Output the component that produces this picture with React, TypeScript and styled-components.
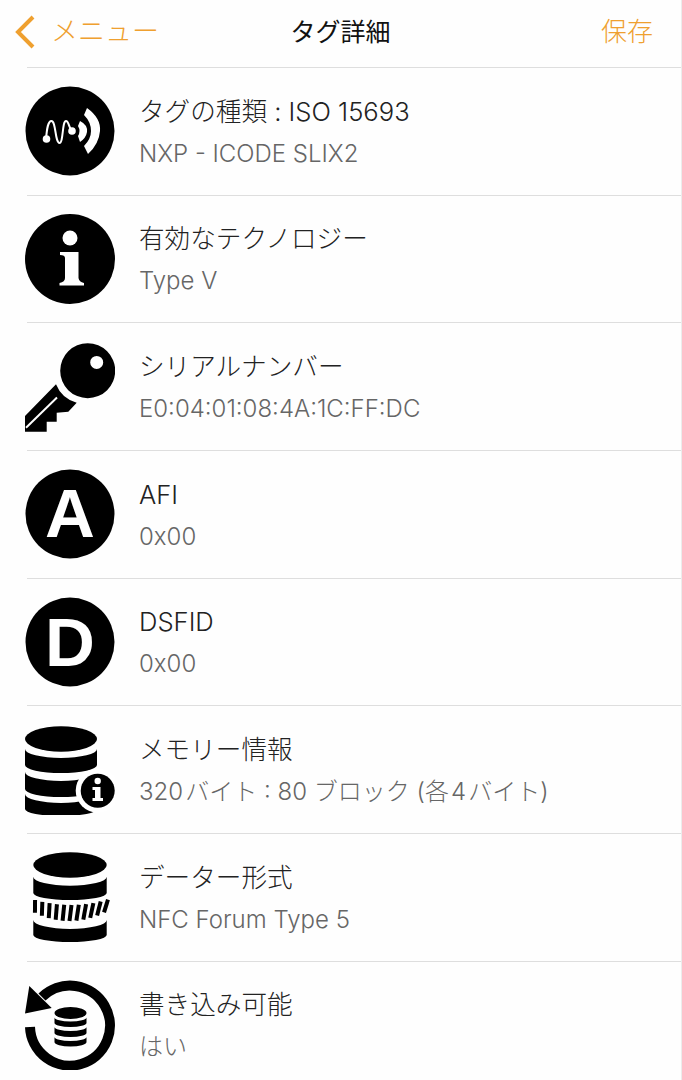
import React from 'react';
import styled, { createGlobalStyle } from 'styled-components';

const ORANGE = '#efa02f';

type Tag = {
  icon: React.ReactNode;
  title: string;
  value: string;
};

const WaveIcon = () => (
  <svg viewBox='0 0 90 90' width='90' height='90'>
    <circle cx='45' cy='45' r='44.5' fill='#000' />
    <path
      d='M21 53 C22 42 23 35 26.5 35 C31 35 30 57 34.5 57 C38.5 57 37 35 41 35 C44 35 44 43 47 45'
      fill='none'
      stroke='#fff'
      strokeWidth='2'
    />
    <circle cx='21.5' cy='53' r='3.8' fill='#fff' />
    <circle cx='47' cy='45' r='3.8' fill='#fff' />
    <path d='M55 35 Q63 39 62 46 Q61 52 55 56 L53 50 Q56 45 53 40 Z' fill='#fff' />
    <path d='M62 22 Q76 32 75 45 Q74 58 63 68 L59 60 Q66 53 66 45 Q66 36 59 29 Z' fill='#fff' />
  </svg>
);

const InfoIcon = () => (
  <svg viewBox='0 0 90 90' width='90' height='90'>
    <circle cx='45' cy='45' r='45' fill='#000' />
    <circle cx='45' cy='24' r='7.5' fill='#fff' />
    <path
      d='M35 38 H53.5 V64 Q54 68 59 69 V71.5 H34.5 V69 Q40 68 40 64 V44 Q40 41 35 41 Z'
      fill='#fff'
    />
  </svg>
);

const KeyIcon = () => (
  <svg viewBox='0 0 90 90' width='90' height='90'>
    <path
      fillRule='evenodd'
      d='M62.7 1.2 A27.5 27.5 0 1 1 62.7 56.2 A27.5 27.5 0 1 1 62.7 1.2 Z M71.7 13.9 A6.5 6.5 0 1 0 71.7 26.9 A6.5 6.5 0 1 0 71.7 13.9 Z'
      fill='#000'
    />
    <path
      d='M31 42.3 L0 74 V89.7 H21.7 V79.7 H31.7 V70.7 L43.3 69.7 L51.7 60.7 A31 31 0 0 1 31 42.3 Z'
      fill='#000'
    />
    <path d='M1 85.7 L32 55.5' stroke='#fff' strokeWidth='2' />
  </svg>
);

const LetterIcon = ({ letter, baseline }: { letter: string; baseline: number }) => (
  <svg viewBox='0 0 90 90' width='90' height='90'>
    <circle cx='45' cy='45' r='44.5' fill='#000' />
    <text
      x='45'
      y={baseline}
      fill='#fff'
      textAnchor='middle'
      fontFamily="'Liberation Sans', sans-serif"
      fontWeight='700'
      fontSize='69'
    >
      {letter}
    </text>
  </svg>
);

const MemoryIcon = () => (
  <svg viewBox='0 0 90 90' width='90' height='90'>
    <ellipse cx='36' cy='14' rx='36' ry='12.7' fill='#000' />
    <path d='M0 24 A36 9 0 0 0 72 24 V40 A36 8 0 0 1 0 40 Z' fill='#000' />
    <path d='M0 47 A36 9 0 0 0 72 47 V64 A36 8 0 0 1 0 64 Z' fill='#000' />
    <path d='M0 69 A36 9 0 0 0 72 69 V84 A36 7 0 0 1 0 84 Z' fill='#000' />
    <circle cx='72.7' cy='65.7' r='22' fill='#fff' />
    <circle cx='72.7' cy='65.7' r='17' fill='#000' />
    <circle cx='72.7' cy='56' r='3.2' fill='#fff' />
    <path d='M67.5 62 H75.5 V73 H78 V76 H67.5 V73 H70 V65 H67.5 Z' fill='#fff' />
  </svg>
);

// the ridged band of the cylinder, one slanted bar per step along the curve
const ridges = Array.from({ length: 11 }, (_, i) => {
  const x = 10 + i * 7.1;
  const t = (x - 45) / 36.7;
  const arc = 1 - t * t;
  const top = 47.5 + 5.5 * arc;
  const bottom = 60 + 9 * arc;
  const slant = 1 + t;
  return { x, top, bottom, slant };
});

const FormatIcon = () => (
  <svg viewBox='0 0 90 90' width='90' height='90'>
    <ellipse cx='45' cy='13' rx='36.7' ry='12.7' fill='#000' />
    <path d='M8.3 24.7 A36.7 9 0 0 0 81.7 24.7 V41 A36.7 7 0 0 1 8.3 41 Z' fill='#000' />
    {ridges.map((r) => (
      <line
        key={r.x}
        x1={r.x + r.slant}
        y1={r.top}
        x2={r.x - r.slant}
        y2={r.bottom}
        stroke='#000'
        strokeWidth='4'
      />
    ))}
    <path d='M8.3 68 A36.7 9 0 0 0 81.7 68 V83 A36.7 7 0 0 1 8.3 83 Z' fill='#000' />
  </svg>
);

const RestoreIcon = () => (
  <svg viewBox='0 0 90 90' width='90' height='90'>
    <path d='M5 47 A40 40 0 1 0 17 17' fill='none' stroke='#000' strokeWidth='10' />
    <path d='M4.3 6 L26.7 28 L0 33.6 Z' fill='#000' />
    <ellipse cx='45.5' cy='33' rx='16' ry='6' fill='#000' />
    <path d='M29.5 37.5 A16 4 0 0 0 61.5 37.5 V43 A16 4 0 0 1 29.5 43 Z' fill='#000' />
    <path d='M29.5 47 A16 4 0 0 0 61.5 47 V53 A16 4 0 0 1 29.5 53 Z' fill='#000' />
    <path d='M29.5 57 A16 4 0 0 0 61.5 57 V62 A16 4.5 0 0 1 29.5 62 Z' fill='#000' />
  </svg>
);

const tags: Tag[] = [
  { icon: <WaveIcon />, title: 'タグの種類 : ISO 15693', value: 'NXP - ICODE SLIX2' },
  { icon: <InfoIcon />, title: '有効なテクノロジー', value: 'Type V' },
  { icon: <KeyIcon />, title: 'シリアルナンバー', value: 'E0:04:01:08:4A:1C:FF:DC' },
  { icon: <LetterIcon letter='A' baseline={68} />, title: 'AFI', value: '0x00' },
  { icon: <LetterIcon letter='D' baseline={69} />, title: 'DSFID', value: '0x00' },
  { icon: <MemoryIcon />, title: 'メモリー情報', value: '320\u200Aバイト : 80 ブロック (各\u200A4\u200Aバイト)' },
  { icon: <FormatIcon />, title: 'データー形式', value: 'NFC Forum Type 5' },
  { icon: <RestoreIcon />, title: '書き込み可能', value: 'はい' },
];

function App() {
  return (
    <Wrapper>
      <GlobalStyle />
      <Header>
        <BackLink>
          <svg viewBox='0 0 24 40' width='24' height='40'>
            <path d='M19 7 L4 22 L19 37' fill='none' stroke={ORANGE} strokeWidth='4' />
          </svg>
          メニュー
        </BackLink>
        <Title>タグ詳細</Title>
        <SaveLink>保存</SaveLink>
      </Header>

      <List>
        {tags.map((tag) => (
          <Row key={tag.title}>
            <IconSlot>{tag.icon}</IconSlot>
            <Texts>
              <RowTitle>{tag.title}</RowTitle>
              <RowValue>{tag.value}</RowValue>
            </Texts>
          </Row>
        ))}
      </List>
    </Wrapper>
  );
}

export default App;

const GlobalStyle = createGlobalStyle`
  html, body {
    margin: 0;
    background: #fefefe;
  }
`;

const Wrapper = styled.div`
  width: 682px;
  height: 1080px;
  box-sizing: border-box;
  overflow: hidden;
  background: #fefefe;
  border-right: 1px solid #ececec;
  font-family: 'Inter', 'Noto Sans CJK JP', sans-serif;
  font-weight: 300;
`;

const Header = styled.header`
  display: grid;
  grid-template-columns: 1fr auto 1fr;
  align-items: center;
  height: 59px;
  padding: 0 28px 8px;
  font-size: 26px;
`;

const BackLink = styled.div`
  display: flex;
  align-items: center;
  gap: 13px;
  margin-left: -14px;
  color: ${ORANGE};
  font-size: 27px;
`;

const Title = styled.div`
  color: #111;
  font-size: 25px;
  font-weight: 400;
`;

const SaveLink = styled.div`
  justify-self: end;
  color: ${ORANGE};
`;

const List = styled.div`
  margin-left: 27px;
  border-top: 1px solid #dedede;
`;

const Row = styled.div`
  display: flex;
  align-items: center;
  gap: 24px;
  box-sizing: border-box;
  height: 127.67px;
  border-bottom: 1px solid #dedede;
`;

const IconSlot = styled.div`
  flex: none;
  display: flex;
  width: 90px;
  height: 90px;
  margin-left: -2px;
`;

const Texts = styled.div`
  display: flex;
  flex-direction: column;
  gap: 9px;
  padding-top: 2px;
`;

const RowTitle = styled.div`
  color: #222;
  font-size: 25.6px;
  line-height: 34px;
`;

const RowValue = styled.div`
  color: #666;
  font-size: 24px;
  line-height: 32px;
`;
